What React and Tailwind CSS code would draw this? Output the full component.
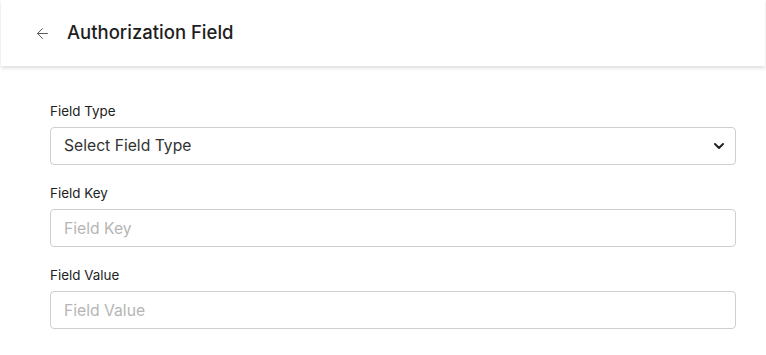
import { ArrowLeft, ChevronDown } from 'lucide-react';

const Field = ({ label, children }) => (
  <div className="flex flex-col gap-[7px]">
    <label className="text-[13.4px] leading-[18px] text-[#222]">{label}</label>
    {children}
  </div>
);

export default function App() {
  return (
    <div className="min-h-[355px] bg-white" style={{ fontFamily: 'Inter, "Noto Sans", sans-serif' }}>
      <div className="mx-px h-[66px] flex items-center gap-[16px] pl-[33px] bg-white shadow-[0_2px_4px_rgba(0,0,0,0.14)]">
        <ArrowLeft className="w-[17px] h-[17px] text-[#444]" strokeWidth={1.25} />
        <h1 className="text-[18.5px] font-medium text-[#1e1e1e]">Authorization Field</h1>
      </div>
      <div className="pl-[50px] pr-[30px] pt-[36px] pb-6 flex flex-col gap-[19px]">
        <Field label="Field Type">
          <div className="h-[38px] border border-[#cfcfcf] rounded-[4px] flex items-center justify-between pl-[13px] pr-[8px]">
            <span className="text-[15.7px] text-[#333]">Select Field Type</span>
            <ChevronDown className="w-[16px] h-[16px] text-[#222]" strokeWidth={3} />
          </div>
        </Field>
        <Field label="Field Key">
          <input
            placeholder="Field Key"
            className="h-[38px] border border-[#cfcfcf] rounded-[4px] px-[13px] text-[15.7px] placeholder:text-[#b5b5b5] outline-none"
          />
        </Field>
        <Field label="Field Value">
          <input
            placeholder="Field Value"
            className="h-[38px] border border-[#cfcfcf] rounded-[4px] px-[13px] text-[15.7px] placeholder:text-[#b5b5b5] outline-none"
          />
        </Field>
      </div>
    </div>
  );
}
